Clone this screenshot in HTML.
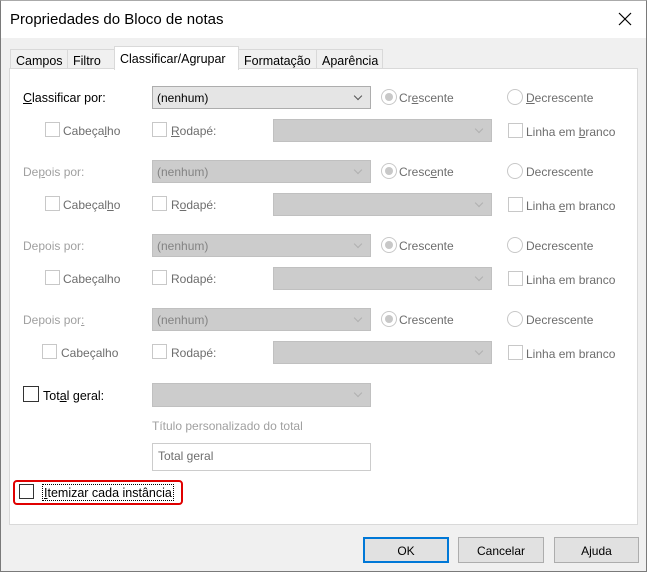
<!DOCTYPE html>
<html><head><meta charset="utf-8"><style>
*{margin:0;padding:0;box-sizing:border-box}
body{width:647px;height:572px;background:#f0f0f0;font-family:"Liberation Sans",sans-serif;font-size:12px;color:#000;position:relative;overflow:hidden}
.a{position:absolute;white-space:nowrap}
.win{position:absolute;left:0;top:0;width:647px;height:572px;border:1px solid #7a7a7a;border-top:1px solid #aaa}
.title{position:absolute;left:1px;top:1px;width:645px;height:37px;background:#fff}
.tab{position:absolute;top:49px;height:20px;border:1px solid #d9d9d9;border-bottom:none;background:#f0f0f0;padding:3px 0 0 5px;font-size:12.5px}
.panel{position:absolute;left:9px;top:68px;width:629px;height:457px;background:#fff;border:1px solid #d9d9d9}
.cb{position:absolute;width:15px;height:15px;border:1px solid #c8c8c8;background:#fff}
.cbk{border-color:#333}
.rd{position:absolute;width:16px;height:16px;border-radius:50%;border:1px solid #c8c8c8;background:#fff}
.rd.on::after{content:"";position:absolute;left:3px;top:3px;width:8px;height:8px;border-radius:50%;background:#c8c8c8}
.combo{position:absolute;width:219px;height:23px;background:#cccccc;border:1px solid #c0c0c0;padding:4px 0 0 4px;color:#838383}
.combo.en{background:#e5e5e5;border-color:#adadad;color:#000}
.combo::after{content:"";position:absolute;right:9px;top:6px;width:5px;height:5px;border-right:1px solid #b0b0b0;border-bottom:1px solid #b0b0b0;transform:rotate(45deg)}
.combo.en::after{border-color:#555;border-width:0 0.6px 0.6px 0}
.g{color:#6d6d6d}.lg{color:#a0a0a0}
u{text-decoration:underline}
.btn{position:absolute;top:537px;height:26px;width:86px;background:#e1e1e1;border:1px solid #adadad;text-align:center;padding-top:5px}
.r{margin-top:1px}
</style></head><body>
<div class="win"></div>
<div class="title"></div>
<div class="a" style="left:10px;top:11px;font-size:15px">Propriedades do Bloco de notas</div>
<svg class="a" style="left:618px;top:12px" width="14" height="14"><path d="M1 1L13 13M13 1L1 13" stroke="#000" stroke-width="1.2"/></svg>

<div class="tab" style="left:10px;width:58px;padding-top:4px">Campos</div>
<div class="tab" style="left:67px;width:48px;padding-top:4px">Filtro</div>
<div class="tab" style="left:238px;width:79px;padding-top:4px">Formatação</div>
<div class="tab" style="left:316px;width:67px;padding-top:4px">Aparência</div>
<div class="panel"></div>
<div class="tab" style="left:114px;top:46px;width:125px;height:24px;background:#fff;padding-top:5px;z-index:2">Classificar/Agrupar</div>

<!-- row 1 -->
<div class="a" style="left:23px;top:91px;font-size:12.5px"><u>C</u>lassificar por:</div>
<div class="combo en" style="left:152px;top:86px">(nenhum)</div>
<div class="rd on" style="left:381px;top:89px"></div><div class="a g" style="left:399px;top:91px">Cr<u>e</u>scente</div>
<div class="rd" style="left:507px;top:89px"></div><div class="a g" style="left:526px;top:91px"><u>D</u>ecrescente</div>
<div class="cb" style="left:45px;top:122px"></div><div class="a g" style="left:63px;top:124px">Cabeça<u>l</u>ho</div>
<div class="cb" style="left:152px;top:122px"></div><div class="a g" style="left:171px;top:124px"><u>R</u>odapé:</div>
<div class="combo" style="left:273px;top:119px"></div>
<div class="cb" style="left:508px;top:123px"></div><div class="a g" style="left:526px;top:125px">Linha em <u>b</u>ranco</div>

<!-- row 2 -->
<div class="a lg" style="left:23px;top:165px">De<u>p</u>ois por:</div>
<div class="combo" style="left:152px;top:160px">(nenhum)</div>
<div class="rd on" style="left:381px;top:163px"></div><div class="a g" style="left:399px;top:165px">Cresc<u>e</u>nte</div>
<div class="rd" style="left:507px;top:163px"></div><div class="a g" style="left:526px;top:165px">Decrescente</div>
<div class="cb" style="left:45px;top:196px"></div><div class="a g" style="left:63px;top:198px">Cabeçal<u>h</u>o</div>
<div class="cb" style="left:152px;top:196px"></div><div class="a g" style="left:171px;top:198px">R<u>o</u>dapé:</div>
<div class="combo" style="left:273px;top:193px"></div>
<div class="cb" style="left:508px;top:197px"></div><div class="a g" style="left:526px;top:199px">Linha <u>e</u>m branco</div>

<!-- row 3 -->
<div class="a lg" style="left:23px;top:239px">Depois por:</div>
<div class="combo" style="left:152px;top:234px">(nenhum)</div>
<div class="rd on" style="left:381px;top:237px"></div><div class="a g" style="left:399px;top:239px">Crescente</div>
<div class="rd" style="left:507px;top:237px"></div><div class="a g" style="left:526px;top:239px">Decrescente</div>
<div class="cb" style="left:45px;top:270px"></div><div class="a g" style="left:63px;top:272px">Cabeçalho</div>
<div class="cb" style="left:152px;top:270px"></div><div class="a g" style="left:171px;top:272px">Rodapé:</div>
<div class="combo" style="left:273px;top:267px"></div>
<div class="cb" style="left:508px;top:271px"></div><div class="a g" style="left:526px;top:273px">Linha em branco</div>

<!-- row 4 -->
<div class="a lg" style="left:23px;top:313px">Depois por<u>:</u></div>
<div class="combo" style="left:152px;top:308px">(nenhum)</div>
<div class="rd on" style="left:381px;top:311px"></div><div class="a g" style="left:399px;top:313px">Crescente</div>
<div class="rd" style="left:507px;top:311px"></div><div class="a g" style="left:526px;top:313px">Decrescente</div>
<div class="cb" style="left:42px;top:344px"></div><div class="a g" style="left:61px;top:346px">Cabeçalho</div>
<div class="cb" style="left:152px;top:344px"></div><div class="a g" style="left:171px;top:346px">Rodapé:</div>
<div class="combo" style="left:273px;top:341px"></div>
<div class="cb" style="left:508px;top:345px"></div><div class="a g" style="left:526px;top:347px">Linha em branco</div>

<!-- total -->
<div class="cb cbk" style="left:23px;top:386px;width:16px;height:16px"></div>
<div class="a" style="left:43px;top:389px;font-size:12.5px">Tot<u>a</u>l geral:</div>
<div class="combo" style="left:152px;top:383px;height:24px;background:#ccc"></div>
<div class="a lg" style="left:152px;top:419px">Título personalizado do total</div>
<div class="a" style="left:152px;top:443px;width:219px;height:28px;border:1px solid #ccc;background:#fff;padding:5px 0 0 5px;color:#6d6d6d">Total geral</div>

<div class="a" style="left:13px;top:480px;width:170px;height:25px;border:2px solid #e00000;border-radius:4px"></div>
<div class="cb cbk" style="left:19px;top:484px;width:15px;height:15px"></div>
<div class="a" style="left:42px;top:484px;border:1px dotted #000;padding:1px 1px 0;font-size:12.5px"><u>I</u>temizar cada instância</div>

<div class="btn" style="left:363px;width:86px;border:2px solid #0078d7;padding-top:5px">OK</div>
<div class="btn" style="left:458px;padding-top:6px">Cancelar</div>
<div class="btn" style="left:554px;width:85px;padding-top:6px">Ajuda</div>
</body></html>
